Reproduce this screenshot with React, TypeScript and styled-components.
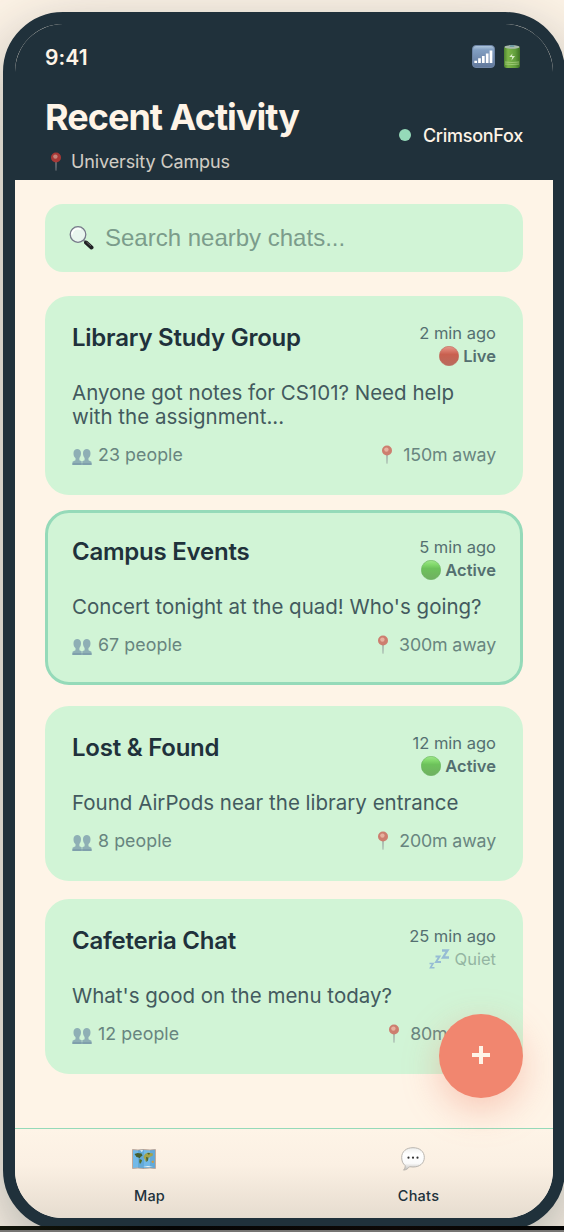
import React from 'react';
import styled, { createGlobalStyle } from 'styled-components';

const ink = '#20313b';
const cream = '#fef4e7';
const mint = '#d1f4d6';
const teal = '#95dab9';
const coral = '#f1866f';

const GlobalStyle = createGlobalStyle`
  * { box-sizing: border-box; }
  html, body { margin: 0; height: 1232px; overflow: hidden; }
  body { background: ${cream}; font-family: Inter, "Liberation Sans", sans-serif; color: ${ink}; }
`;

const Stage = styled.div`
  position: relative;
  width: 564px;
  height: 1232px;
  padding: 12px 0 0 3px;
  overflow: hidden;
`;

const Phone = styled.div`
  width: 562px;
  height: 1218px;
  border: 12px solid ${ink};
  border-radius: 60px;
  background: ${cream};
  overflow: hidden;
  box-shadow: 0 24px 70px rgba(32, 49, 59, 0.38);
  display: flex;
  flex-direction: column;
`;

const Header = styled.header`
  height: 156px;
  flex: none;
  padding: 20px 30px 0;
  background: ${ink};
  color: ${cream};
`;

const StatusRow = styled.div`
  display: flex;
  align-items: center;
  justify-content: space-between;
  height: 26px;
  font-size: 21px;
  font-weight: 600;
  letter-spacing: 0.1px;
`;

const StatusIcons = styled.div`
  display: flex;
  gap: 9px;
  padding-right: 3px;
  margin-top: -2px;
`;

const HeaderRow = styled.div`
  display: flex;
  justify-content: space-between;
  align-items: center;
  margin-top: 25px;
`;

const Title = styled.h1`
  margin: 0;
  font-size: 36px;
  line-height: 44px;
  font-weight: 750;
  letter-spacing: -0.97px;
`;

const Place = styled.div`
  display: flex;
  align-items: center;
  gap: 9px;
  margin-top: 11px;
  padding-left: 5px;
  font-size: 18px;
  line-height: 24px;
  letter-spacing: -0.12px;
  opacity: 0.8;
`;

const User = styled.div`
  display: flex;
  align-items: center;
  gap: 12px;
  font-size: 18px;
  font-weight: 500;
  line-height: 24px;
  letter-spacing: -0.27px;
  padding-top: 2px;
`;

const OnlineDot = styled.span`
  width: 12px;
  height: 12px;
  margin-top: -1px;
  border-radius: 50%;
  background: ${teal};
`;

const Content = styled.main`
  flex: 1;
  padding: 24px 30px 0;
`;

const Search = styled.div`
  display: flex;
  align-items: center;
  gap: 11px;
  height: 68px;
  padding: 0 24px;
  margin-bottom: 24px;
  border-radius: 18px;
  background: ${mint};
  color: #7b9c8b;
  font-family: "Liberation Sans", Arial, sans-serif;
  font-size: 24px;
`;

const Card = styled.article<{ $selected?: boolean; $gap: number; $height: number }>`
  height: ${p => p.$height}px;
  margin-bottom: ${p => p.$gap}px;
  padding: 24px;
  border: 3px solid ${p => (p.$selected ? teal : mint)};
  border-radius: 24px;
  background: ${mint};
`;

const CardHead = styled.div`
  display: flex;
  justify-content: space-between;
  height: 46px;
`;

const CardTitle = styled.h2`
  margin: 0;
  font-size: 24px;
  line-height: 30px;
  font-weight: 600;
  letter-spacing: -0.24px;
`;

const Meta = styled.div`
  display: flex;
  flex-direction: column;
  align-items: flex-end;
  font-size: 16.5px;
  line-height: 23px;
  color: #546f70;
  margin-top: -1px;
`;

const Badge = styled.div<{ $quiet?: boolean }>`
  display: flex;
  align-items: center;
  gap: 4px;
  font-weight: ${p => (p.$quiet ? 400 : 600)};
  color: ${p => (p.$quiet ? '#94b5a2' : '#546f70')};

  svg { margin-top: -1px; }
`;

const Message = styled.p`
  margin: 12px 0 15px;
  font-size: 20.5px;
  line-height: 24px;
  color: #435a5e;
`;

const Stats = styled.div`
  display: flex;
  justify-content: space-between;
  font-size: 17.8px;
  line-height: 22px;
  color: #68857f;
`;

const Stat = styled.span<{ $distance?: boolean }>`
  display: flex;
  align-items: center;
  gap: ${p => (p.$distance ? 10 : 6)}px;
  letter-spacing: ${p => (p.$distance ? -0.15 : 0.07)}px;
`;

const Fab = styled.button`
  position: absolute;
  left: 439px;
  top: 1014px;
  width: 84px;
  height: 84px;
  padding: 0 0 2px;
  border: 0;
  border-radius: 50%;
  background: ${coral};
  box-shadow: 0 12px 36px rgba(241, 134, 111, 0.4);
  display: grid;
  place-items: center;
`;

const Nav = styled.nav`
  height: 90px;
  flex: none;
  display: grid;
  grid-template-columns: 1fr 1fr;
  border-top: 1px solid ${teal};
  background: linear-gradient(180deg, #fef4e7 0%, #fbf0e3 40%, #e6dccf 100%);
`;

const Tab = styled.div`
  display: flex;
  flex-direction: column;
  align-items: center;
  padding-top: 18px;
  font-size: 14.5px;
  line-height: 20px;
  font-weight: 500;
  letter-spacing: 0.25px;

  svg { margin: 0 11px 15px 0; }
`;

const Desk = styled.div`
  position: absolute;
  left: 0;
  right: 0;
  bottom: 0;
  height: 6px;
  background: linear-gradient(90deg, #12150a, #050505 30%, #0d0806 70%, #030303);
  border-bottom: 2px solid #777674;
`;

const Pin = ({ faded = false }: { faded?: boolean }) => (
  <svg width="12" height="20" viewBox="0 0 12 20" opacity={faded ? 0.72 : 1}>
    <path d="M5.200 9h1.600l-.3 9.200-.5.8-.5-.8z" fill="#8c8f94" />
    <circle cx="6" cy="5.500" r="5" fill={faded ? '#cc5148' : '#c93a35'} />
    <circle cx="5.400" cy="4.600" r="2.200" fill="#f0988a" />
  </svg>
);

const People = () => (
  <svg width="20" height="17" viewBox="0 0 20 17" style={{ marginTop: 2 }}>
    <g fill="#8eafb5">
      <path d="M1.500 5C1.500-.2 9-.2 9 5c0 3-1 4-1.600 5v2.200l2.300 1V17H.5v-3.200l3-1.500V10C2.200 9 1.500 8 1.500 5z" />
      <path d="M18.500 5c0-5.200-7.500-5.200-7.500 0 0 3 1 4 1.600 5v2.200l-2.300 1V17h9.200v-3.200l-3-1.500V10c1.300-1 2-2 2-5z" />
    </g>
    <path d="M.5 15h9.200v2H.5zM10.300 15h9.200v2h-9.200z" fill="#7f9fac" />
  </svg>
);

const Ball = ({ live = false }: { live?: boolean }) => (
  <svg width="20" height="20" viewBox="0 0 20 20">
    <defs>
      <linearGradient id={live ? 'ballRed' : 'ballGreen'} x1="0" y1="0" x2="0" y2="1">
        <stop offset="0" stopColor={live ? '#e59a8c' : '#a0e68c'} />
        <stop offset=".22" stopColor={live ? '#d97a6b' : '#82d96c'} />
        <stop offset=".42" stopColor={live ? '#c9604f' : '#6dc25b'} />
        <stop offset="1" stopColor={live ? '#b86c5f' : '#70af62'} />
      </linearGradient>
    </defs>
    <circle cx="10" cy="10" r="9.700" fill={`url(#${live ? 'ballRed' : 'ballGreen'})`} stroke={live ? '#bd6557' : '#67b35a'} strokeWidth=".6" />
  </svg>
);

const Zzz = () => (
  <svg width="21" height="20" viewBox="0 0 21 20" fill="none" stroke="#96bcd4" style={{ marginRight: 1 }}>
    <path d="M13 1.500h5.500L14 8.500h6" strokeWidth="2.300" />
    <path d="M6.500 7.500h4L7 13h5" strokeWidth="1.900" />
    <path d="M.5 14.500h3.500L1.500 18.800h4" strokeWidth="1.600" />
  </svg>
);

const Signal = () => (
  <svg width="23" height="23" viewBox="0 0 23 23">
    <defs>
      <linearGradient id="signalFill" x1="0" y1="0" x2="0" y2="1">
        <stop offset="0" stopColor="#b3cadf" />
        <stop offset=".2" stopColor="#829fc2" />
        <stop offset="1" stopColor="#61789b" />
      </linearGradient>
    </defs>
    <rect x=".5" y=".5" width="22" height="22" rx="3.500" fill="url(#signalFill)" stroke="#6c83a4" />
    <path d="M3.700 18v-2.300M7.500 18v-4.700M11.300 18v-7M15.200 18v-9.600M19 18V5.500" stroke="#fff" strokeWidth="2.700" />
  </svg>
);

const Battery = () => (
  <svg width="16" height="23" viewBox="0 0 16 23">
    <defs>
      <linearGradient id="cellFill">
        <stop offset="0" stopColor="#4d8330" />
        <stop offset=".25" stopColor="#7cb548" />
        <stop offset=".7" stopColor="#619e3c" />
        <stop offset="1" stopColor="#3d7023" />
      </linearGradient>
    </defs>
    <rect y="1" width="16" height="22" rx="2.500" fill="url(#cellFill)" />
    <ellipse cx="8" cy="1.900" rx="7.500" ry="1.800" fill="#a8b9aa" />
    <rect x="5.500" y="0" width="5" height="2" rx="1" fill="#6f9aa2" />
    <path d="M8.500 8.500l-3.300 3.500h3l-.7 3.500 3.500-4.500H8z" fill="#d8eac5" />
    <path d="M1 17q7 1 14 0M1 19q7 1 14 0" fill="none" stroke="#a9cf82" strokeWidth=".8" />
  </svg>
);

const Magnifier = () => (
  <svg width="25" height="25" viewBox="0 0 25 25">
    <path d="M14.500 14l3 3" stroke="#888d92" strokeWidth="2" />
    <path d="M17 16.500l5.500 5" stroke="#202124" strokeWidth="4" strokeLinecap="round" />
    <path d="M17.500 16l4.500 4" stroke="#777" strokeWidth=".8" />
    <circle cx="9" cy="8.500" r="7.800" fill="#e8f5ee" stroke="#77798a" strokeWidth="1.300" />
    <path d="M3 8.500a6 6 0 0 1 9-5" fill="none" stroke="#fff" strokeWidth="1.500" />
  </svg>
);

const MapIcon = () => (
  <svg width="24" height="24" viewBox="0 0 24 24">
    <path d="M.5 2.500L6 3l6-.5 6 .5 5.500-.5v19L18 21l-6 .5L6 21l-5.500.5z" fill="#72b9e8" stroke="#c1a99a" />
    <path d="M6 3l6-.5v19L6 21zM18 3l5-.3v18.600L18 21z" fill="#3e83b5" opacity=".3" />
    <path d="M2.500 7l3-1 4 .5 1 2-2 1.500-1 1.500-1-1-2-.5z" fill="#455f31" />
    <path d="M7.500 12l2.500 1-.5 2-1.500 2-.8-2z" fill="#526d25" />
    <path d="M13 7l3-1.500 5 1-.5 2.500-2 .5-1.500 1.500-1.500-1-1.500 5-1.500-3-1-2z" fill="#a3a34a" />
    <path d="M14 10l2.500.5-.5 3-1.500 1.500zM15 6l3 0-1 2z" fill="#4f642d" />
    <path d="M19.500 14l2-.5.5 2-2 .5z" fill="#d09a38" />
    <path d="M8 3.500l3-.5-1 2zM11 20l5-1 5 1z" fill="#eef7f8" />
  </svg>
);

const Bubble = () => (
  <svg width="24" height="24" viewBox="0 0 24 24">
    <defs>
      <linearGradient id="bubbleFill" x1="0" y1="0" x2="0" y2="1">
        <stop offset="0" stopColor="#eeeeec" />
        <stop offset=".3" stopColor="#fff" />
        <stop offset=".7" stopColor="#fafafa" />
        <stop offset="1" stopColor="#bdbbb8" />
      </linearGradient>
    </defs>
    <path d="M12 .7c7 0 11.300 4 11.300 9.700S19 20 12 20l-3.500-.3c-1.500 2-3.500 3.300-6 3.400 1.300-1.200 1.800-2.600 1.700-4.500C1.800 16.700.7 14 .7 10.400.7 4.700 5 .7 12 .7z" fill="url(#bubbleFill)" stroke="#b9b5af" />
    <g fill="#333"><circle cx="7.500" cy="10.700" r="1.100" /><circle cx="12" cy="10.700" r="1.100" /><circle cx="16.500" cy="10.700" r="1.100" /></g>
  </svg>
);

type Chat = {
  title: string; time: string; status: 'Live' | 'Active' | 'Quiet';
  text: React.ReactNode; people: number; distance: string;
  height: number; gap: number; selected?: boolean;
};

const chats: Chat[] = [
  { title: 'Library Study Group', time: '2 min ago', status: 'Live', text: <>Anyone got notes for CS101? Need help<br />with the assignment...</>, people: 23, distance: '150m', height: 199, gap: 15 },
  { title: 'Campus Events', time: '5 min ago', status: 'Active', text: "Concert tonight at the quad! Who's going?", people: 67, distance: '300m', height: 175, gap: 21, selected: true },
  { title: 'Lost & Found', time: '12 min ago', status: 'Active', text: 'Found AirPods near the library entrance', people: 8, distance: '200m', height: 175, gap: 18 },
  { title: 'Cafeteria Chat', time: '25 min ago', status: 'Quiet', text: "What's good on the menu today?", people: 12, distance: '80m', height: 175, gap: 0 },
];

export default function App() {
  return (
    <Stage>
      <GlobalStyle />
      <Phone>
        <Header>
          <StatusRow>
            <span>9:41</span>
            <StatusIcons><Signal /><Battery /></StatusIcons>
          </StatusRow>
          <HeaderRow>
            <div>
              <Title>Recent Activity</Title>
              <Place><Pin />University Campus</Place>
            </div>
            <User><OnlineDot />CrimsonFox</User>
          </HeaderRow>
        </Header>
        <Content>
          <Search><Magnifier /><span>Search nearby chats...</span></Search>
          {chats.map(c => (
            <Card key={c.title} $selected={c.selected} $gap={c.gap} $height={c.height}>
              <CardHead>
                <CardTitle>{c.title}</CardTitle>
                <Meta>
                  <span>{c.time}</span>
                  <Badge $quiet={c.status === 'Quiet'}>
                    {c.status === 'Quiet' ? <Zzz /> : <Ball live={c.status === 'Live'} />}
                    {c.status}
                  </Badge>
                </Meta>
              </CardHead>
              <Message>{c.text}</Message>
              <Stats>
                <Stat><People />{c.people} people</Stat>
                <Stat $distance><Pin faded />{c.distance} away</Stat>
              </Stats>
            </Card>
          ))}
        </Content>
        <Nav>
          <Tab><MapIcon />Map</Tab>
          <Tab><Bubble />Chats</Tab>
        </Nav>
      </Phone>
      <Fab aria-label="New chat">
        <svg width="18" height="18" viewBox="0 0 18 18"><path d="M9 0v18M0 9h18" stroke={cream} strokeWidth="4" /></svg>
      </Fab>
      <Desk />
    </Stage>
  );
}
